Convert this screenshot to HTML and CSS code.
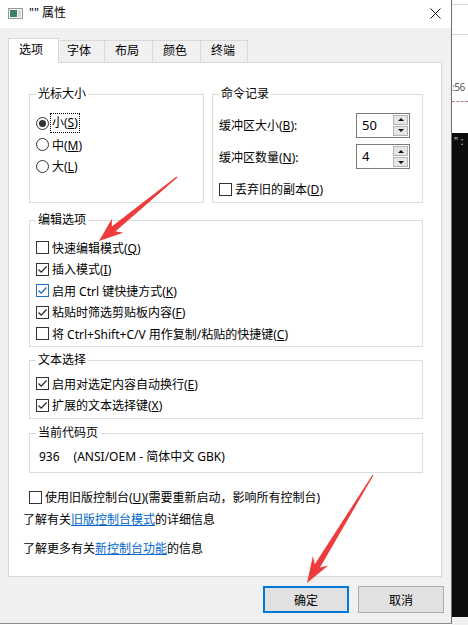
FILE: index.html
```html
<!doctype html>
<html>

<head>
	<meta charset='utf-8'>
	<title>"" 属性</title>

	<link rel="stylesheet" href="styles.css">
</head>

<body>
	<div class="screen">
		<div class="dialog">
			<div class="titlebar">
				<svg class="appicon" width="15" height="11" viewBox="0 0 15 11">
					<rect x="0.5" y="0.5" width="14" height="10" fill="#f4f4f4" stroke="#9a9a9a" />
					<rect x="2" y="2" width="7" height="7" fill="#3f7f6a" />
					<rect x="10" y="2" width="3" height="7" fill="#d8d8d8" />
				</svg>
				<span class="title">"" 属性</span>
				<svg class="close" width="11" height="11" viewBox="0 0 11 11">
					<path d="M0.5 0.5 L10.5 10.5 M10.5 0.5 L0.5 10.5" />
				</svg>
			</div>

			<div class="tabs">
				<div class="tab active">选项</div>
				<div class="tab w47">字体</div>
				<div class="tab w49">布局</div>
				<div class="tab w49">颜色</div>
				<div class="tab w48">终端</div>
			</div>

			<div class="panel">
				<div class="toprow">
					<fieldset class="group cursor">
						<legend>光标大小</legend>
						<div class="opt"><span class="radio on"></span><span class="focus">小(<u>S</u>)</span></div>
						<div class="opt"><span class="radio"></span><span>中(<u>M</u>)</span></div>
						<div class="opt"><span class="radio"></span><span>大(<u>L</u>)</span></div>
					</fieldset>

					<fieldset class="group history">
						<legend>命令记录</legend>
						<div class="field">
							<span>缓冲区大小(<u>B</u>):</span>
							<div class="spin">
								<span class="val">50</span>
								<div class="spinbtns"><span class="sb up"></span><span class="sb down"></span></div>
							</div>
						</div>
						<div class="field second">
							<span>缓冲区数量(<u>N</u>):</span>
							<div class="spin">
								<span class="val">4</span>
								<div class="spinbtns"><span class="sb up"></span><span class="sb down"></span></div>
							</div>
						</div>
						<div class="opt discard"><span class="cb"></span><span>丢弃旧的副本(<u>D</u>)</span></div>
					</fieldset>
				</div>

				<fieldset class="group edit">
					<legend>编辑选项</legend>
					<div class="opt"><span class="cb"></span><span>快速编辑模式(<u>Q</u>)</span></div>
					<div class="opt"><span class="cb"><svg viewBox="0 0 11 11"><path d="M1.5 5.5 L4.2 8.2 L9.5 2.5" /></svg></span><span>插入模式(<u>I</u>)</span></div>
					<div class="opt"><span class="cb hot"><svg viewBox="0 0 11 11"><path d="M1.5 5.5 L4.2 8.2 L9.5 2.5" /></svg></span><span>启用 Ctrl 键快捷方式(<u>K</u>)</span></div>
					<div class="opt"><span class="cb"><svg viewBox="0 0 11 11"><path d="M1.5 5.5 L4.2 8.2 L9.5 2.5" /></svg></span><span>粘贴时筛选剪贴板内容(<u>F</u>)</span></div>
					<div class="opt"><span class="cb"></span><span>将 Ctrl+Shift+C/V 用作复制/粘贴的快捷键(<u>C</u>)</span></div>
				</fieldset>

				<fieldset class="group select">
					<legend>文本选择</legend>
					<div class="opt"><span class="cb"><svg viewBox="0 0 11 11"><path d="M1.5 5.5 L4.2 8.2 L9.5 2.5" /></svg></span><span>启用对选定内容自动换行(<u>E</u>)</span></div>
					<div class="opt"><span class="cb"><svg viewBox="0 0 11 11"><path d="M1.5 5.5 L4.2 8.2 L9.5 2.5" /></svg></span><span>扩展的文本选择键(<u>X</u>)</span></div>
				</fieldset>

				<fieldset class="group codepage">
					<legend>当前代码页</legend>
					<div class="cp"><span>936</span><span class="cp-name">(ANSI/OEM - 简体中文 GBK)</span></div>
				</fieldset>

				<div class="opt legacy"><span class="cb"></span><span>使用旧版控制台(<u>U</u>)(需要重新启动，影响所有控制台)</span></div>
				<div class="note first">了解有关<a href="#">旧版控制台模式</a>的详细信息</div>
				<div class="note">了解更多有关<a href="#">新控制台功能</a>的信息</div>
			</div>

			<div class="buttons">
				<button class="btn default">确定</button>
				<button class="btn">取消</button>
			</div>
		</div>

		<div class="console">
			<div class="con-head">
				<div class="con-time">:56</div>
				<div class="con-dash"></div>
			</div>
			<div class="con-body">" :</div>
			<div class="con-foot"></div>
		</div>

		<!-- annotation arrows drawn over the screenshot -->
		<svg class="arrows" width="468" height="625" viewBox="0 0 468 625">
			<polygon points="177.4,177.4 115.6,231.3 123.3,232.8 99,241 111.9,218.8 111.8,226.6 176.6,176.6" />
			<polygon points="373.5,475.3 320,567.5 328.2,565.5 307,583 312.9,556.1 314.8,564.3 372.5,474.7" />
		</svg>
	</div>
</body>

</html>
```

FILE: styles.css
```css
* {
	box-sizing: border-box;
}

html,
body {
	margin: 0;
	height: 100%;
}

body {
	font-family: "Noto Sans", "Noto Sans CJK SC", sans-serif;
	font-size: 12px;
	color: #000;
	background: #fff;
	overflow: hidden;
}

.screen {
	display: flex;
	height: 625px;
	position: relative;
}

.dialog {
	width: 452px;
	height: 624px;
	display: flex;
	flex-direction: column;
	background: #f0f0f0;
	border-right: 1px solid #6e6e6e;
	border-bottom: 1px solid #8c8c8c;
}

.titlebar {
	height: 28px;
	background: #fff;
	display: flex;
	align-items: center;
	padding: 0 10px 2px 8px;
}

.appicon {
	margin-right: 6px;
}

.title {
	line-height: 16px;
}

.close {
	margin-left: auto;
}

.close path {
	stroke: #111;
	stroke-width: 1;
	fill: none;
}

/* tabs */
.tabs {
	display: flex;
	align-items: flex-end;
	padding: 10px 0 0 8px;
}

.tab {
	width: 51px;
	height: 22px;
	line-height: 19px;
	padding-left: 10px;
	border: 1px solid #d9d9d9;
	border-bottom: none;
	background: #f0f0f0;
	margin-left: -1px;
}

.tab.active {
	height: 25px;
	line-height: 22px;
	background: #fff;
	margin-left: 0;
	margin-bottom: -1px;
	position: relative;
	z-index: 1;
}

.tab.w47 {
	width: 47px;
	padding-left: 8px;
}

.tab.w49 {
	width: 49px;
}

.tab.w48 {
	width: 48px;
}

.panel {
	height: 515px;
	margin: 0 9px 0 8px;
	background: #fff;
	border: 1px solid #d9d9d9;
	padding: 24px 18px 0 20px;
}

/* groups */
.toprow {
	display: flex;
	gap: 8px;
}

.group {
	margin: 0;
	min-width: 0;
	border: 1px solid #dcdcdc;
	padding: 11.5px 12px 3px 6px;
}

.group legend {
	padding: 0 2px;
	line-height: 14px;
}

.cursor {
	width: 175px;
}

.history {
	width: 211px;
}

.edit {
	margin-top: 10px;
	padding-top: 10px;
	padding-bottom: 1px;
}

.select {
	margin-top: 6.5px;
	padding-top: 6px;
	padding-bottom: 2px;
}

.codepage {
	margin-top: 7px;
	padding-top: 7px;
	padding-bottom: 5px;
}

.opt {
	display: flex;
	align-items: center;
	gap: 3px;
	height: 21.5px;
	white-space: nowrap;
}

.radio {
	width: 13px;
	height: 13px;
	border: 1px solid #333;
	border-radius: 50%;
	background: #fff;
	padding: 2px;
}

.radio.on::after {
	content: "";
	display: block;
	width: 7px;
	height: 7px;
	border-radius: 50%;
	background: #333;
}

.focus {
	line-height: 16px;
	padding: 1px 1px;
	margin-left: -1px;
	outline: 1px dotted #000;
}

.cb {
	width: 13px;
	height: 13px;
	border: 1px solid #333;
	background: #fff;
	flex: none;
	display: flex;
}

.cb svg {
	width: 11px;
	height: 11px;
}

.cb path {
	fill: none;
	stroke: #222;
	stroke-width: 1.2;
}

.cb.hot {
	border-color: #1f74c9;
}

.cb.hot path {
	stroke: #1a5fa8;
}

/* spin boxes */
.field {
	display: flex;
	align-items: center;
	justify-content: space-between;
	height: 25px;
}

.field.second {
	margin-top: 6.5px;
}

.spin {
	width: 54px;
	height: 25px;
	display: flex;
	border: 1px solid #7a7a7a;
	background: #fff;
}

.spin .val {
	flex: 1;
	padding-left: 5px;
	font-size: 13px;
	line-height: 22px;
}

.spinbtns {
	width: 16px;
	display: flex;
	flex-direction: column;
	gap: 1px;
	padding: 1px 1px 1px 0;
}

.sb {
	flex: 1;
	background: #e6e6e6;
	border: 1px solid #b4b4b4;
	display: flex;
	align-items: center;
	justify-content: center;
}

.sb::after {
	content: "";
	border-left: 3px solid transparent;
	border-right: 3px solid transparent;
}

.sb.up::after {
	border-bottom: 3px solid #111;
}

.sb.down::after {
	border-top: 3px solid #111;
}

.discard {
	margin-top: 10px;
	height: 20px;
}

.cp {
	line-height: 20px;
	padding-left: 3px;
}

.cp-name {
	margin-left: 14px;
}

.legacy {
	margin-top: 14px;
	height: 20px;
}

.note {
	margin-left: -6px;
	margin-top: 9px;
	line-height: 20px;
}

.note.first {
	margin-top: 3px;
}

.note a {
	color: #0066cc;
	text-decoration: underline;
}

/* buttons */
.buttons {
	display: flex;
	justify-content: flex-end;
	gap: 9px;
	padding: 9px 7px 0 0;
}

.btn {
	width: 86px;
	height: 27px;
	font-family: inherit;
	font-size: 12px;
	color: #000;
	background: #e1e1e1;
	border: 1px solid #adadad;
	padding: 0;
}

.btn.default {
	border: 2px solid #0078d7;
}

/* console window behind */
.console {
	flex: 1;
	display: flex;
	flex-direction: column;
	overflow: hidden;
}

.con-head {
	height: 133px;
	background: #fff;
	border-top: 1px solid #fff;
}

.con-head::before {
	content: "";
	display: block;
	height: 29px;
	margin-top: 3px;
	border-top: 1px solid #d6d6d6;
	border-bottom: 1px solid #d6d6d6;
}

.con-time {
	margin-top: 44px;
	font-size: 10px;
	letter-spacing: -0.5px;
	line-height: 16px;
	color: #555;
	white-space: nowrap;
}

.con-dash {
	margin-top: 6px;
	border-top: 1px dashed #b08080;
}

.con-body {
	flex: 1;
	background: #0c0c0c;
	color: #ddd;
	font-size: 10px;
	line-height: 12px;
	padding: 2px 0 0 2px;
	white-space: nowrap;
}

.con-foot {
	height: 8px;
	background: #f0f0f0;
}

.arrows {
	position: absolute;
	left: 0;
	top: 0;
	pointer-events: none;
}

.arrows polygon {
	fill: #ee3b3b;
}
```
